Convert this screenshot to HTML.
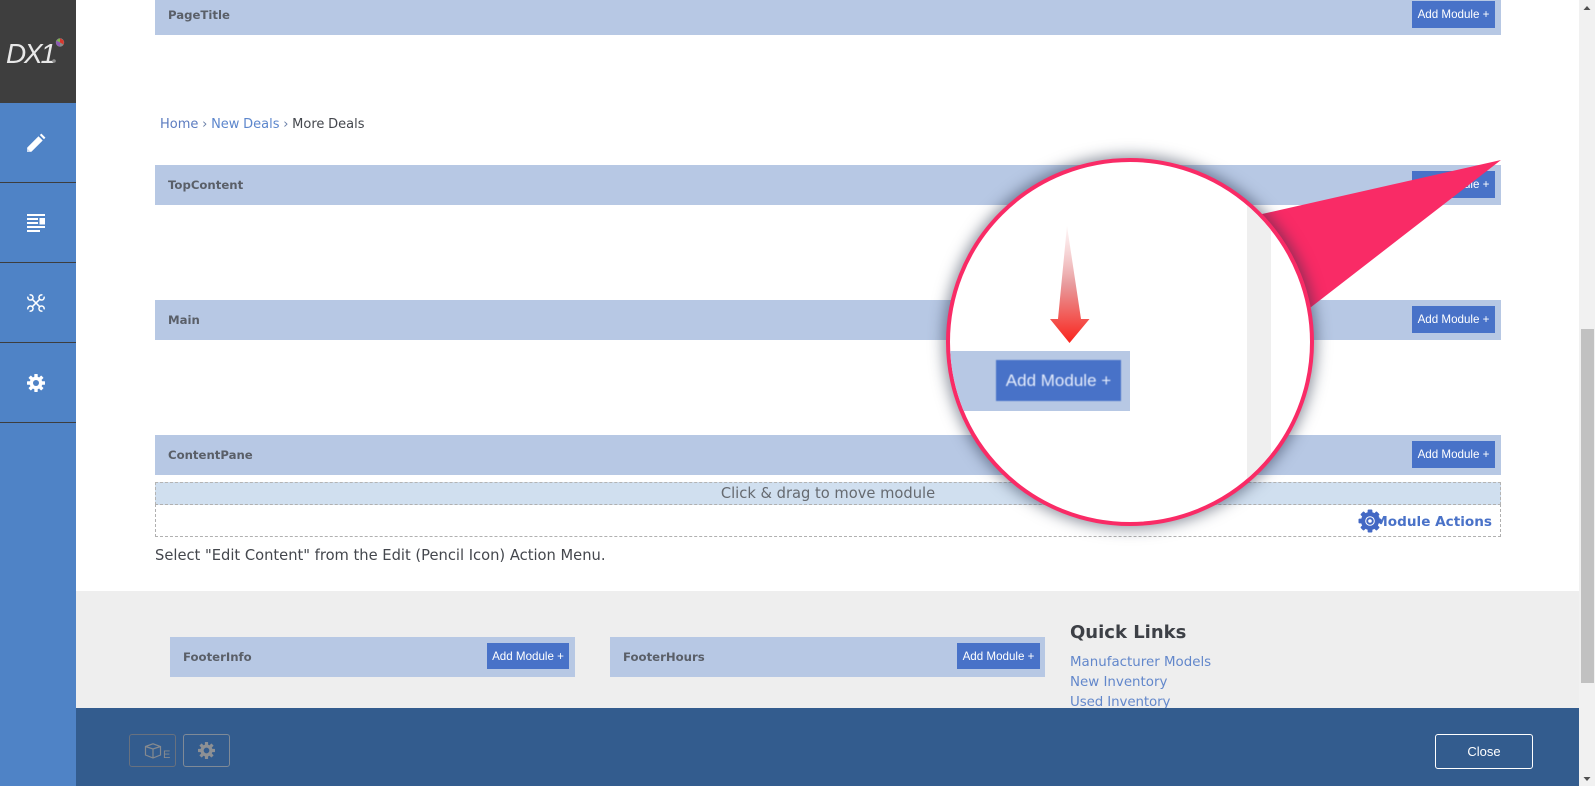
<!DOCTYPE html>
<html><head><meta charset="utf-8">
<style>
html,body{margin:0;padding:0;width:1595px;height:786px;overflow:hidden;background:#fff}
*{box-sizing:border-box}
.a{position:absolute}
.band{position:absolute;background:#b7c8e4;height:40px}
.band b{position:absolute;left:13px;top:13px;font:bold 11.7px/15px "DejaVu Sans",sans-serif;color:#5a5f68;white-space:nowrap}
.btn{position:absolute;background:#4872c8;color:#fff;font:11.6px/28px "Liberation Sans",sans-serif;text-align:center;white-space:nowrap;height:27px;width:83px}
.side{position:absolute;left:0;width:76px;height:80px;background:#4f83c6;border-bottom:1px solid #3d3d3d}
.lnk{position:absolute;left:1070px;font:13.4px/20px "DejaVu Sans",sans-serif;color:#6287cb;white-space:nowrap}
</style></head><body>

<!-- page bands -->
<div class="band" style="left:155px;width:1346px;top:-5px"><b>PageTitle</b><div class="btn" style="right:6px;top:6px">Add Module +</div></div>

<div class="a" style="left:160px;top:115px;font:13px/20px 'DejaVu Sans',sans-serif;word-spacing:-.4px;white-space:nowrap;color:#44474d"><span style="color:#5c7cc0">Home</span> <span style="color:#6a7fa8">›</span> <span style="color:#5c86cc">New Deals</span> <span style="color:#6a7fa8">›</span> More Deals</div>

<div class="band" style="left:155px;width:1346px;top:165px"><b>TopContent</b><div class="btn" style="right:6px;top:6px">Add Module +</div></div>
<div class="band" style="left:155px;width:1346px;top:300px"><b>Main</b><div class="btn" style="right:6px;top:6px">Add Module +</div></div>
<div class="band" style="left:155px;width:1346px;top:435px"><b>ContentPane</b><div class="btn" style="right:6px;top:6px">Add Module +</div></div>

<div class="a" style="left:155px;top:482px;width:1346px;height:23px;background:#d0dfef;border:1px dashed #b4b4b4;border-bottom:0;text-align:center;font:14.7px/22px 'DejaVu Sans',sans-serif;color:#666a70">Click &amp; drag to move module</div>
<div class="a" style="left:155px;top:504px;width:1346px;height:33px;border:1px dashed #b0b0b0"></div>
<div class="a" style="right:103px;top:513px;font:bold 13.6px/18px 'DejaVu Sans',sans-serif;color:#4a72c8;white-space:nowrap">Module Actions</div>
<svg class="a" style="left:1358px;top:509px" width="24" height="24" viewBox="-12 -12 24 24"><g fill="#4368c4"><rect x="-2.4" y="-11.5" width="4.8" height="23" rx="1"/><rect x="-2.4" y="-11.5" width="4.8" height="23" rx="1" transform="rotate(45)"/><rect x="-2.4" y="-11.5" width="4.8" height="23" rx="1" transform="rotate(90)"/><rect x="-2.4" y="-11.5" width="4.8" height="23" rx="1" transform="rotate(135)"/></g><circle r="6.5" fill="none" stroke="#4368c4" stroke-width="5"/><circle r="4.8" fill="#fff"/><circle r="2.8" fill="none" stroke="#4368c4" stroke-width="2"/></svg>

<div class="a" style="left:155px;top:546px;font:14.7px/20px 'DejaVu Sans',sans-serif;color:#44474d;white-space:nowrap">Select "Edit Content" from the Edit (Pencil Icon) Action Menu.</div>

<!-- footer -->
<div class="a" style="left:76px;top:591px;width:1503px;height:117px;background:#eeeeee"></div>
<div class="band" style="left:170px;width:405px;top:637px"><b>FooterInfo</b><div class="btn" style="left:317px;width:82px;top:6px;height:26px">Add Module +</div></div>
<div class="band" style="left:610px;width:435px;top:637px"><b>FooterHours</b><div class="btn" style="left:347px;width:83px;top:6px;height:26px">Add Module +</div></div>
<div class="a" style="left:1070px;top:621px;font:bold 18px/24px 'DejaVu Sans',sans-serif;color:#3d4046;white-space:nowrap">Quick Links</div>
<div class="lnk" style="top:653px">Manufacturer Models</div>
<div class="lnk" style="top:673px">New Inventory</div>
<div class="lnk" style="top:693px;letter-spacing:-.1px">Used Inventory</div>

<!-- callout -->
<svg class="a" style="left:0;top:0" width="1595" height="786">
<defs>
<linearGradient id="ar" x1="0" y1="226" x2="0" y2="343" gradientUnits="userSpaceOnUse"><stop offset="0" stop-color="#f6c9cb" stop-opacity=".2"/><stop offset=".5" stop-color="#e89a9c"/><stop offset="1" stop-color="#fa241c"/></linearGradient>
</defs>
<polygon points="1501,160 1262,214 1306,311" fill="#f92b66"/>
</svg>
<div class="a" style="left:946px;top:158px;width:368px;height:368px;border-radius:50%;background:#fff;border:4px solid #f92b66;box-shadow:0 0 14px 3px rgba(35,45,70,.5);overflow:hidden">
  <div class="a" style="left:297px;top:0;width:24px;height:360px;background:#efefef"></div>
  <div class="a" style="left:-4px;top:189px;width:184px;height:60px;background:#b7c8e4"></div>
  <div class="a" style="left:46px;top:198px;width:125px;height:41px;background:#4872c8;color:#e6edfc;font:17px/41px 'Liberation Sans',sans-serif;text-align:center;white-space:nowrap;filter:blur(.4px)">Add Module +</div>
</div>
<svg class="a" style="left:0;top:0" width="1595" height="786"><polygon points="1067,226 1058,319 1050,319 1069.5,343 1089.5,319 1081,319" fill="url(#ar)"/></svg>

<!-- sidebar -->
<div class="a" style="left:0;top:0;width:76px;height:786px;background:#4f83c6"></div>
<div class="a" style="left:0;top:0;width:76px;height:103px;background:#3e3e3e"></div>
<div class="a" style="left:6px;top:36px;font:italic 28px/36px 'Liberation Sans',sans-serif;color:#e8e8e8;letter-spacing:-2.2px;white-space:nowrap">DX1</div>
<svg class="a" style="left:50px;top:36px" width="16" height="32" viewBox="0 0 16 32"><circle cx="10" cy="6.5" r="4.2" fill="#8a8a8a"/><path d="M10 2.3L13.7 4.5V8.5L10 6.5Z" fill="#d8372c"/><path d="M10 2.3L6.3 4.5L10 6.5Z" fill="#7fb24a"/><path d="M6.3 4.5V8.5L10 10.7V6.5Z" fill="#8c58b4"/><circle cx="4" cy="25" r="1.8" fill="#8d8d8d"/></svg>
<div class="side" style="top:103px"></div>
<div class="side" style="top:183px"></div>
<div class="side" style="top:263px"></div>
<div class="side" style="top:343px"></div>
<!-- pencil -->
<svg class="a" style="left:26px;top:133px" width="20" height="20" viewBox="0 0 20 20"><path d="M1 19L1.2 14.6L12.5 3.3L16.7 7.5L5.4 18.8Z M13.8 2L15.4 .6L19.4 4.6L18 6.2Z" fill="#fff"/><path d="M1 19L1.2 15.5L4.5 18.8Z" fill="#c9d9ef"/></svg>
<!-- news -->
<svg class="a" style="left:27px;top:214px" width="18" height="18" viewBox="0 0 18 18" fill="#fff"><rect x="0" y="0" width="18" height="2"/><rect x="0" y="4" width="11" height="2"/><rect x="12.5" y="4" width="5.5" height="6.5"/><rect x="0" y="8" width="11" height="2"/><rect x="0" y="12" width="18" height="2"/><rect x="0" y="16" width="13" height="2"/></svg>
<!-- tools -->
<svg class="a" style="left:27px;top:294px" width="18" height="18" viewBox="0 0 18 18" fill="none" stroke="#fff" stroke-width="1.5"><path d="M4.8 4.8L13.2 13.2M13.2 4.8L4.8 13.2"/><path d="M1 2.6A2.6 2.6 0 1 0 2.6 1"/><path d="M17 2.6A2.6 2.6 0 1 1 15.4 1"/><path d="M1 15.4A2.6 2.6 0 1 1 2.6 17"/><path d="M17 15.4A2.6 2.6 0 1 0 15.4 17"/></svg>
<!-- gear -->
<svg class="a" style="left:27px;top:374px" width="18" height="18" viewBox="-9 -9 18 18"><g fill="#fff"><rect x="-1.7" y="-9" width="3.4" height="18" rx=".5"/><rect x="-1.7" y="-9" width="3.4" height="18" rx=".5" transform="rotate(45)"/><rect x="-1.7" y="-9" width="3.4" height="18" rx=".5" transform="rotate(90)"/><rect x="-1.7" y="-9" width="3.4" height="18" rx=".5" transform="rotate(135)"/></g><circle r="6.4" fill="#fff"/><circle r="3" fill="#4f83c6"/></svg>

<!-- bottom bar -->
<div class="a" style="left:76px;top:708px;width:1503px;height:78px;background:#335c8e"></div>
<div class="a" style="left:129px;top:734px;width:47px;height:33px;border:1px solid #68717f;border-radius:3px"></div>
<svg class="a" style="left:143px;top:741px" width="20" height="20" viewBox="0 0 20 20" fill="none" stroke="#868a8f" stroke-width="1.2"><path d="M2.5 5.5L10 2.8L17.5 5.5V14L10 17L2.5 14Z M2.5 5.5L10 8L17.5 5.5 M10 8V17"/></svg>
<div class="a" style="left:163px;top:748px;font:11px/14px 'Liberation Sans',sans-serif;color:#868a8f">E</div>
<div class="a" style="left:183px;top:734px;width:47px;height:33px;border:1px solid #7f8a97;border-radius:3px"></div>
<svg class="a" style="left:198px;top:742px" width="17" height="17" viewBox="-9 -9 18 18"><g fill="#8d9094"><rect x="-1.7" y="-9" width="3.4" height="18" rx=".5"/><rect x="-1.7" y="-9" width="3.4" height="18" rx=".5" transform="rotate(45)"/><rect x="-1.7" y="-9" width="3.4" height="18" rx=".5" transform="rotate(90)"/><rect x="-1.7" y="-9" width="3.4" height="18" rx=".5" transform="rotate(135)"/></g><circle r="6.4" fill="#8d9094"/><circle r="3" fill="#335c8e"/></svg>
<div class="a" style="left:1435px;top:734px;width:98px;height:35px;border:1px solid #fff;border-radius:3px;color:#fff;font:13px/33px 'Liberation Sans',sans-serif;text-align:center">Close</div>

<!-- scrollbar -->
<div class="a" style="left:1579px;top:0;width:16px;height:786px;background:#f1f1f1"></div>
<div class="a" style="left:1581px;top:329px;width:13px;height:354px;background:#c1c1c1"></div>
<svg class="a" style="left:1579px;top:0" width="16" height="786"><polygon points="8,6 11.5,10 4.5,10" fill="#505050"/><polygon points="4.5,777 11.5,777 8,781" fill="#505050"/></svg>
</body></html>
